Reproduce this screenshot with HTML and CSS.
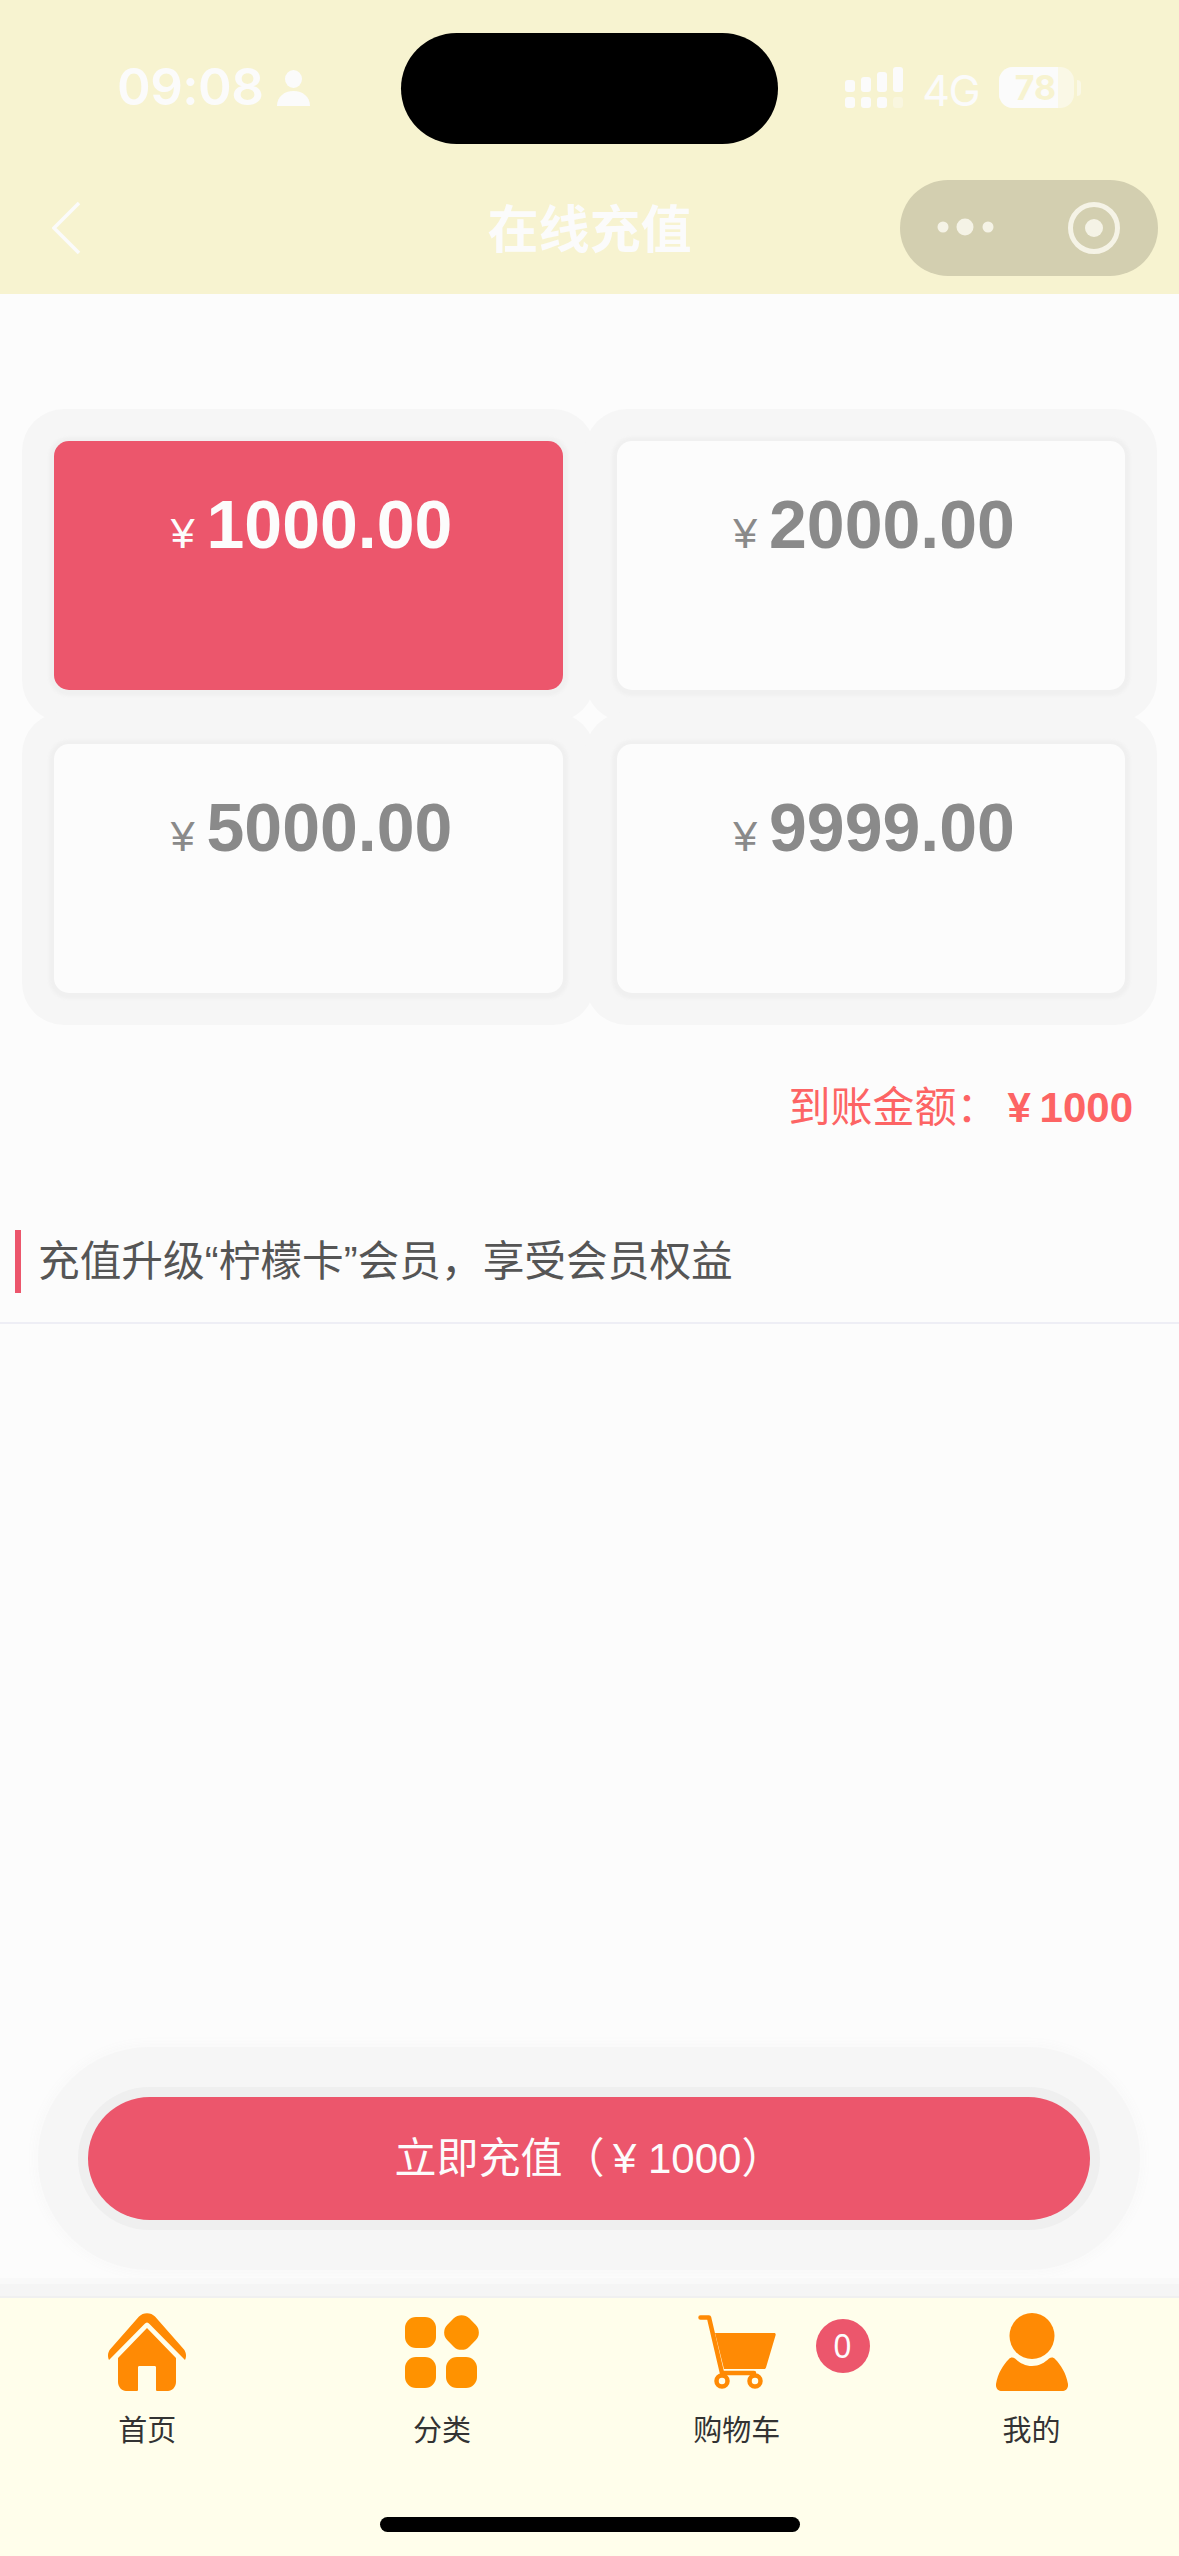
FILE: index.html
```html
<!DOCTYPE html>
<html lang="zh">
<head>
<meta charset="utf-8">
<title>在线充值</title>
<link rel="stylesheet" href="styles.css">
</head>
<body>
<div class="page">
  <header class="header">
    <div class="island"></div>
    <div class="status">
      <div class="status-left">
        <span class="time">09:08</span>
        <svg class="person" width="33" height="36" viewBox="0 0 33 36"><ellipse cx="16.500" cy="9" rx="8.500" ry="9" fill="#fbfbfb"/><path d="M0 36C0 27 7 21 16.500 21S33 27 33 36Z" fill="#fbfbfb"/></svg>
      </div>
      <div class="status-right">
        <svg class="signal" width="58" height="41" viewBox="0 0 58 41">
          <g fill="#fbfbfb">
            <rect x="0" y="13" width="10" height="12" rx="3"/><rect x="16" y="10" width="10" height="15" rx="3"/><rect x="32" y="5" width="10" height="20" rx="3"/><rect x="48" y="0" width="10" height="25" rx="3"/>
            <rect x="0" y="30" width="10" height="11" rx="3"/><rect x="16" y="30" width="10" height="11" rx="3"/><rect x="32" y="30" width="10" height="11" rx="3"/>
          </g>
          <rect x="48" y="30" width="10" height="11" rx="3" fill="#fbfbfb" opacity=".35"/>
        </svg>
        <span class="net">4G</span>
        <div class="battery">
          <div class="battery-body"><div class="battery-fill"></div><span class="battery-num">78</span></div>
          <div class="battery-tip"></div>
        </div>
      </div>
    </div>
    <div class="nav">
      <svg class="back" width="30" height="54" viewBox="0 0 30 54"><path d="M27 2 2 27l25 25" fill="none" stroke="#fbfbfb" stroke-width="3.500"/></svg>
      <h1 class="title">在线充值</h1>
      <div class="capsule">
        <svg width="258" height="96" viewBox="0 0 258 96">
          <circle cx="43" cy="47" r="5.500" fill="#f5f3e6"/><circle cx="65" cy="47" r="8.500" fill="#f5f3e6"/><circle cx="88" cy="47" r="5.500" fill="#f5f3e6"/>
          <circle cx="194" cy="48" r="23.500" fill="none" stroke="#f5f3e6" stroke-width="5"/><circle cx="194" cy="48" r="9" fill="#f5f3e6"/>
        </svg>
      </div>
    </div>
  </header>

  <main class="main">
    <div class="cards">
      <div class="card card-active"><span class="yen">¥</span><span class="amount">1000.00</span></div>
      <div class="card"><span class="yen">¥</span><span class="amount">2000.00</span></div>
      <div class="card"><span class="yen">¥</span><span class="amount">5000.00</span></div>
      <div class="card"><span class="yen">¥</span><span class="amount">9999.00</span></div>
    </div>
    <div class="arrive"><span class="arrive-label">到账金额：</span><span class="arrive-num">¥ 1000</span></div>
    <div class="section"><span class="section-bar"></span><span class="section-text">充值升级“柠檬卡”会员，享受会员权益</span></div>
    <div class="action"><button class="pay">立即充值（&#8201;¥ 1000）</button></div>
  </main>

  <nav class="tabbar">
    <div class="tab">
      <svg class="tab-icon" width="78" height="78" viewBox="0 0 78 78"><g fill="#ff8a04"><path d="M1 47C-.5 44 -.5 40 2 36.500L31 3.500C35 -1 43 -1 47 3.500L76 36.500C78.500 40 78.500 44 77 47L41.500 11C40 9 38 9 36.500 11Z"/><path d="M39 15 68 45V69C68 74 64 78 60 78H49.500C48.500 78 48 77.500 48 76.500V54.500C48 53.500 47.500 53 46.500 53H31.500C30.500 53 30 53.500 30 54.500V76.500C30 77.500 29.500 78 28.500 78H18C14 78 10 74 10 69V45Z"/></g></svg>
      <span class="tab-label">首页</span>
    </div>
    <div class="tab">
      <svg class="tab-icon" width="74" height="74" viewBox="0 0 74 74"><g fill="#ff9200"><rect x="0" y="2" width="31" height="31" rx="11"/><rect x="0" y="42" width="31" height="31" rx="11"/><rect x="41" y="42" width="31" height="31" rx="11"/><rect x="41" y="2" width="31" height="31" rx="11" transform="rotate(45 56.500 17.500)"/></g></svg>
      <span class="tab-label">分类</span>
    </div>
    <div class="tab">
      <svg class="tab-icon" width="78" height="74" viewBox="0 0 78 74"><g fill="#ff8a04"><path d="M17 18H76C77.500 18 78 19 77.500 20.500L68 52.500C67.500 53.500 67 54 66 54H26Z"/></g><g fill="none" stroke="#ff8a04" stroke-width="4.500" stroke-linecap="round" stroke-linejoin="round"><path d="M2.500 2.500H11L24 58H56"/><circle cx="24" cy="66" r="5.500"/><circle cx="57" cy="66" r="5.500"/></g></svg>
      <span class="tab-label">购物车</span>
      <span class="badge">0</span>
    </div>
    <div class="tab">
      <svg class="tab-icon" width="72" height="78" viewBox="0 0 72 78"><g fill="#ff8a04"><ellipse cx="36" cy="23" rx="22.500" ry="23"/><path d="M13 46C14.500 44 17 44 19 45.500C23 49.500 29 53 36 53S49 49.500 53 45.500C55 44 57.500 44 59 46C65 52 70 60 72 71C72.500 75 70 78 66 78H6C2 78 -.5 75 0 71C2 60 7 52 13 46Z"/></g></svg>
      <span class="tab-label">我的</span>
    </div>
    <div class="home-bar"></div>
  </nav>
</div>
</body>
</html>
```
FILE: styles.css
```css
* { box-sizing: border-box; }
html, body { margin: 0; padding: 0; }
body { font-family: "Liberation Sans", "Noto Sans CJK SC", sans-serif; background: #fcfcfc; }
.page { width: 1179px; height: 2556px; display: flex; flex-direction: column; overflow: hidden; background: #fcfcfc; }

.header { position: relative; height: 294px; flex: none; background: #f7f3d0; color: #fbfbfb; display: flex; flex-direction: column; }
.island { position: absolute; left: 401px; top: 33px; width: 377px; height: 111px; border-radius: 56px; background: #000; }
.status { height: 180px; flex: none; display: flex; justify-content: space-between; padding: 67px 98px 0 117px; }
.status-left { display: flex; align-items: flex-start; gap: 14px; }
.time { font-family: Inter, sans-serif; font-size: 51px; line-height: 40px; font-weight: 600; letter-spacing: -.5px; }
.person { margin-top: 3px; }
.status-right { display: flex; align-items: flex-start; gap: 20px; }
.net { font-family: Inter, sans-serif; font-size: 43px; line-height: 40px; font-weight: 400; margin: 3px 0 0 -1px; letter-spacing: -1.500px; }
.battery { display: flex; align-items: center; gap: 3px; }
.battery-body { position: relative; width: 75px; height: 41px; border-radius: 14px; background: #faf8e6; display: flex; align-items: center; justify-content: center; }
.battery-fill { position: absolute; left: 0; top: 0; bottom: 0; width: 59px; border-radius: 14px 0 0 14px; background: #fbfbfb; }
.battery-num { position: relative; font-family: Inter, sans-serif; font-weight: 700; font-size: 34px; line-height: 41px; color: #f7f3d0; margin-left: -2px; }
.battery-tip { width: 4px; height: 16px; border-radius: 0 8px 8px 0; background: #faf8e6; }

.nav { position: relative; height: 114px; flex: none; display: flex; align-items: flex-start; justify-content: center; }
.back { position: absolute; left: 52px; top: 21px; }
.title { margin: 10px 0 0; font-family: "Noto Sans CJK SC", sans-serif; font-size: 51px; line-height: 72px; font-weight: 700; color: #fbfbfb; }
.capsule { position: absolute; left: 900px; top: 0; width: 258px; height: 96px; border-radius: 48px; background: #d3cfb0; }
.capsule svg { display: block; }

.main { flex: 1; min-height: 0; display: flex; flex-direction: column; }
.cards { display: grid; grid-template-columns: 509px 508px; grid-auto-rows: 249px; gap: 54px; padding: 147px 0 0 54px; }
.card { display: flex; align-items: baseline; justify-content: center; gap: 12px; padding: 44px 0 0 6px; border-radius: 15px; background: #fcfcfc; color: #8a8a8a; box-shadow: 0 1px 3px 5px #f0f0f0, 0 0 0 32px #f6f6f6; }
.card-active { background: #ec566c; color: #fcfcfc; }
.yen { font-size: 43px; line-height: 78px; }
.amount { font-size: 68px; line-height: 78px; font-weight: 700; }

.arrive { display: flex; justify-content: flex-end; align-items: center; margin-top: 85px; height: 60px; padding-right: 46px; color: #fd6464; }
.arrive-label { font-size: 42px; line-height: 60px; margin-right: 9px; }
.arrive-num { font-size: 42px; line-height: 60px; font-weight: 700; word-spacing: -3px; }

.section { display: flex; align-items: center; gap: 17px; margin-top: 79px; height: 107px; padding: 0 0 16px 15px; border-bottom: 2px solid #eeeef5; }
.section-bar { width: 6px; height: 63px; background: #ec566c; }
.section-text { font-size: 41.700px; line-height: 63px; color: #555555; }

.action { margin-top: auto; padding: 0 89px 78px 88px; }
.pay { display: block; width: 100%; height: 123px; border: 0; border-radius: 62px; padding: 0 0 8px; background: #ec566c; color: #fcfcfc; font-family: "Liberation Sans", "Noto Sans CJK SC", sans-serif; font-size: 42px; box-shadow: 0 0 0 10px #efefef, 0 0 0 50px #f6f6f6, 0 0 8px 55px #f9f9f9; }

.tabbar { position: relative; height: 258px; flex: none; display: grid; grid-template-columns: repeat(4, 1fr); background: #fffeeb; box-shadow: 0 0 0 2px #f0f0f0, 0 0 0 14px #f5f5f5, 0 0 0 20px #f9f9f9; }
.tab { position: relative; display: flex; flex-direction: column; align-items: center; padding-top: 15px; }
.tab-icon { height: 78px; display: block; }
.tab-label { margin-top: 20px; font-size: 29px; line-height: 40px; color: #333333; }
.badge { position: absolute; left: 226px; top: 21px; width: 54px; height: 54px; border-radius: 50%; background: #ec566c; color: #fcfcfc; font-family: "Noto Sans", sans-serif; font-size: 32px; line-height: 54px; text-align: center; }
.home-bar { position: absolute; left: 380px; top: 219px; width: 420px; height: 15px; border-radius: 8px; background: #000; }
```
